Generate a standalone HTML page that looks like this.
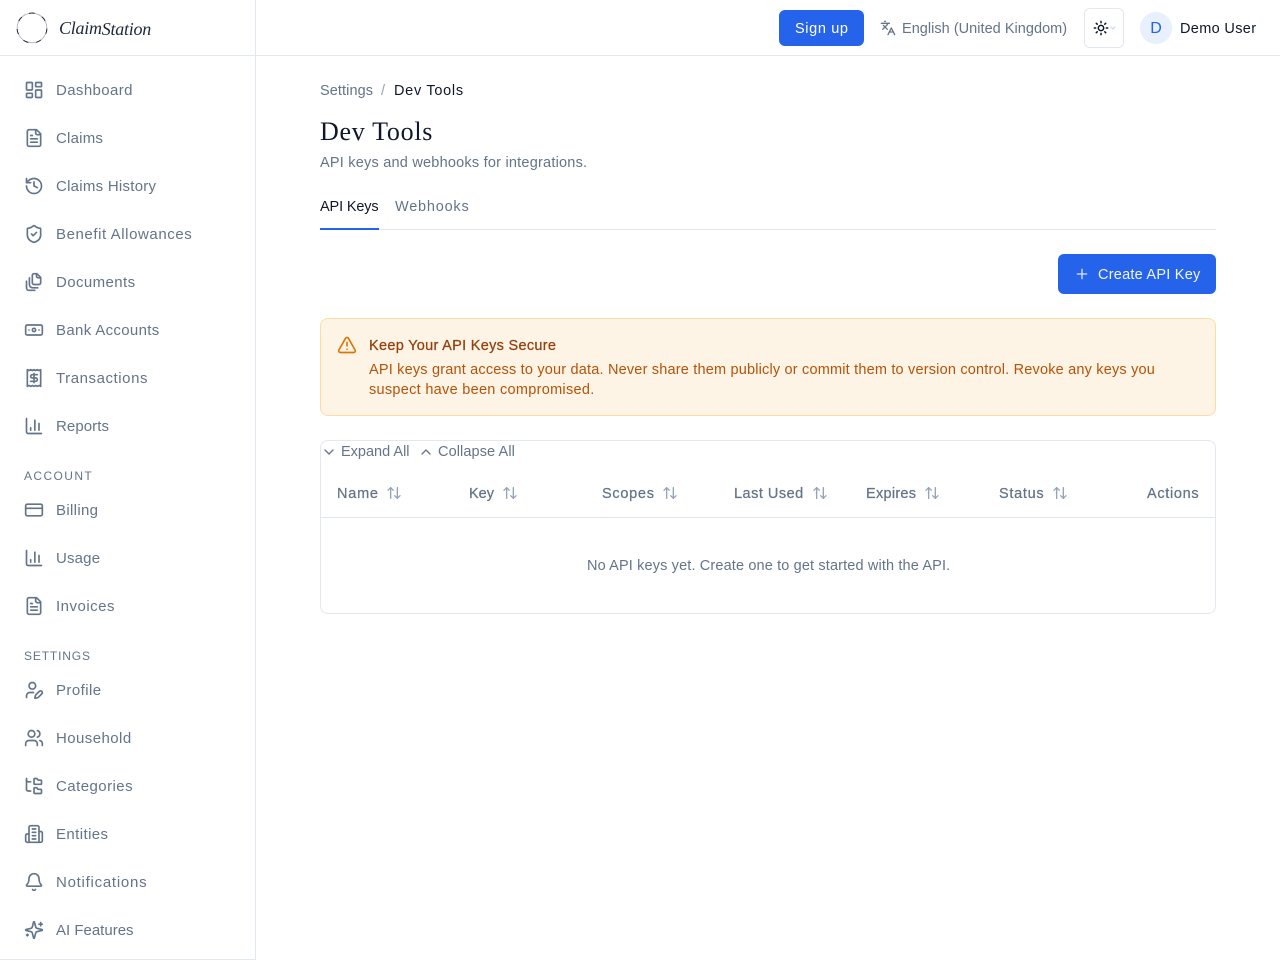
<!DOCTYPE html>
<html lang="en">
<head>
<meta charset="utf-8">
<title>Dev Tools</title>
<style>
*{box-sizing:border-box}
html,body{margin:0;padding:0;background:#fff}
body{width:1280px;height:960px;overflow:hidden;position:relative;font-family:"Liberation Sans",sans-serif;font-size:14.5px;color:#64748b}
.t{position:absolute;height:20px;line-height:20px;white-space:nowrap;margin-top:1px}
.n{font-size:15px}
.m{-webkit-text-stroke:.25px currentColor}
.i{position:absolute;fill:none;stroke:#64748b;stroke-width:2;stroke-linecap:round;stroke-linejoin:round}
.box{position:absolute}
.h{font-size:12px;height:16px;line-height:16px;margin-top:0}
.s{stroke:#94a3b8}
</style>
</head>
<body>
<aside class="box" style="left:0;top:0;width:256px;height:960px;border-right:1px solid #e2e8f0;border-bottom:1px solid #e2e8f0"></aside>
<header class="box" style="left:0;top:55px;width:1280px;height:1px;background:#e2e8f0"></header>

<svg class="box" style="left:16px;top:12px" width="32" height="32" viewBox="0 0 32 32" fill="none" stroke-linecap="round">
<path d="M16 1A17 17 0 0 1 27.7 6.6A17 17 0 0 1 30.6 19.3A17 17 0 0 1 22.5 29.5A17 17 0 0 1 9.5 29.5A17 17 0 0 1 1.4 19.3A17 17 0 0 1 4.3 6.6A17 17 0 0 1 16 1Z" stroke="#a3a8b0" stroke-width=".8"/>
<path pathLength="70" stroke-dasharray="2 6 2 0" d="M16 1A17 17 0 0 1 27.7 6.6A17 17 0 0 1 30.6 19.3A17 17 0 0 1 22.5 29.5A17 17 0 0 1 9.5 29.5A17 17 0 0 1 1.4 19.3A17 17 0 0 1 4.3 6.6A17 17 0 0 1 16 1Z" stroke="#0f172a" stroke-width=".9" stroke-linecap="butt"/>
</svg>
<div class="t" style="left:59px;top:18px;margin-top:0;font-family:'Liberation Serif',serif;font-style:italic;font-size:18px;color:#1e293b;letter-spacing:-.25px">Claim<span style="position:relative;top:1px">Station</span></div>

<!-- sidebar icons -->
<svg class="i" style="left:24px;top:80px" width="20" height="20" viewBox="0 0 24 24"><rect x="3" y="3" width="7" height="9" rx="1"/><rect x="14" y="3" width="7" height="5" rx="1"/><rect x="14" y="12" width="7" height="9" rx="1"/><rect x="3" y="16" width="7" height="5" rx="1"/></svg>
<div class="t n" style="left:56px;top:80px;letter-spacing:.38px">Dashboard</div>

<svg class="i" style="left:24px;top:128px" width="20" height="20" viewBox="0 0 24 24"><path d="M15 2H6a2 2 0 0 0-2 2v16a2 2 0 0 0 2 2h12a2 2 0 0 0 2-2V7Z"/><path d="M14 2v4a2 2 0 0 0 2 2h4"/><path d="M10 9H8"/><path d="M16 13H8"/><path d="M16 17H8"/></svg>
<div class="t n" style="left:56px;top:128px;letter-spacing:.22px">Claims</div>

<svg class="i" style="left:24px;top:176px" width="20" height="20" viewBox="0 0 24 24"><path d="M3 12a9 9 0 1 0 9-9 9.75 9.75 0 0 0-6.74 2.74L3 8"/><path d="M3 3v5h5"/><path d="M12 7v5l4 2"/></svg>
<div class="t n" style="left:56px;top:176px;letter-spacing:.26px">Claims History</div>

<svg class="i" style="left:24px;top:224px" width="20" height="20" viewBox="0 0 24 24"><path d="M20 13c0 5-3.5 7.5-7.66 8.95a1 1 0 0 1-.67-.01C7.5 20.5 4 18 4 13V6a1 1 0 0 1 1-1c2 0 4.5-1.2 6.24-2.72a1.17 1.17 0 0 1 1.52 0C14.51 3.81 17 5 19 5a1 1 0 0 1 1 1z"/><path d="m9 12 2 2 4-4"/></svg>
<div class="t n" style="left:56px;top:224px;letter-spacing:.58px">Benefit Allowances</div>

<svg class="i" style="left:24px;top:272px" width="20" height="20" viewBox="0 0 24 24"><path d="M20 6.5V13a2 2 0 0 1-2 2h-6a2 2 0 0 1-2-2V4a2 2 0 0 1 2-2h3.5z"/><path d="M15 2v3a2 2 0 0 0 2 2h3"/><path d="M6.5 7v8a4 4 0 0 0 4 4h6"/><path d="M3 11v8a3 3 0 0 0 3 3h7"/></svg>
<div class="t n" style="left:56px;top:272px;letter-spacing:.4px">Documents</div>

<svg class="i" style="left:24px;top:320px" width="20" height="20" viewBox="0 0 24 24"><rect x="2" y="6" width="20" height="12" rx="2"/><circle cx="12" cy="12" r="2"/><path d="M6 12h.01M18 12h.01"/></svg>
<div class="t n" style="left:56px;top:320px;letter-spacing:.34px">Bank Accounts</div>

<svg class="i" style="left:24px;top:368px" width="20" height="20" viewBox="0 0 24 24"><path d="M4 2v20l2-1 2 1 2-1 2 1 2-1 2 1 2-1 2 1V2l-2 1-2-1-2 1-2-1-2 1-2-1-2 1Z"/><path d="M16 8h-6a2 2 0 1 0 0 4h4a2 2 0 1 1 0 4H8"/><path d="M12 17.5v-11"/></svg>
<div class="t n" style="left:56px;top:368px;letter-spacing:.56px">Transactions</div>

<svg class="i" style="left:24px;top:416px" width="20" height="20" viewBox="0 0 24 24"><path d="M3 3v16a2 2 0 0 0 2 2h16"/><path d="M18 17V9"/><path d="M13 17V5"/><path d="M8 17v-3"/></svg>
<div class="t n" style="left:56px;top:416px;letter-spacing:.07px">Reports</div>

<div class="t h" style="left:24px;top:468px;letter-spacing:1.4px">ACCOUNT</div>

<svg class="i" style="left:24px;top:500px" width="20" height="20" viewBox="0 0 24 24"><rect x="2" y="5" width="20" height="14" rx="2"/><path d="M2 10h20"/></svg>
<div class="t n" style="left:56px;top:500px;letter-spacing:.33px">Billing</div>

<svg class="i" style="left:24px;top:548px" width="20" height="20" viewBox="0 0 24 24"><path d="M3 3v16a2 2 0 0 0 2 2h16"/><path d="M18 17V9"/><path d="M13 17V5"/><path d="M8 17v-3"/></svg>
<div class="t n" style="left:56px;top:548px;letter-spacing:.17px">Usage</div>

<svg class="i" style="left:24px;top:596px" width="20" height="20" viewBox="0 0 24 24"><path d="M15 2H6a2 2 0 0 0-2 2v16a2 2 0 0 0 2 2h12a2 2 0 0 0 2-2V7Z"/><path d="M14 2v4a2 2 0 0 0 2 2h4"/><path d="M10 9H8"/><path d="M16 13H8"/><path d="M16 17H8"/></svg>
<div class="t n" style="left:56px;top:596px;letter-spacing:.5px">Invoices</div>

<div class="t h" style="left:24px;top:648px;letter-spacing:.85px">SETTINGS</div>

<svg class="i" style="left:24px;top:680px" width="20" height="20" viewBox="0 0 24 24"><path d="M11.5 15H7a4 4 0 0 0-4 4v2"/><path d="M21.378 16.626a1 1 0 0 0-3.004-3.004l-4.01 4.012a2 2 0 0 0-.506.854l-.837 2.87a.5.5 0 0 0 .62.62l2.87-.837a2 2 0 0 0 .854-.506z"/><circle cx="10" cy="7" r="4"/></svg>
<div class="t n" style="left:56px;top:680px;letter-spacing:.42px">Profile</div>

<svg class="i" style="left:24px;top:728px" width="20" height="20" viewBox="0 0 24 24"><path d="M16 21v-2a4 4 0 0 0-4-4H6a4 4 0 0 0-4 4v2"/><circle cx="9" cy="7" r="4"/><path d="M22 21v-2a4 4 0 0 0-3-3.87"/><path d="M16 3.13a4 4 0 0 1 0 7.75"/></svg>
<div class="t n" style="left:56px;top:728px;letter-spacing:.43px">Household</div>

<svg class="i" style="left:24px;top:776px" width="20" height="20" viewBox="0 0 24 24"><path d="M20 10a1 1 0 0 0 1-1V6a1 1 0 0 0-1-1h-2.5a1 1 0 0 1-.8-.4l-.9-1.2A1 1 0 0 0 15 3h-2a1 1 0 0 0-1 1v5a1 1 0 0 0 1 1Z"/><path d="M20 21a1 1 0 0 0 1-1v-3a1 1 0 0 0-1-1h-2.9a1 1 0 0 1-.88-.55l-.42-.85a1 1 0 0 0-.92-.6H13a1 1 0 0 0-1 1v5a1 1 0 0 0 1 1Z"/><path d="M3 5a2 2 0 0 0 2 2h3"/><path d="M3 3v13a2 2 0 0 0 2 2h3"/></svg>
<div class="t n" style="left:56px;top:776px;letter-spacing:.45px">Categories</div>

<svg class="i" style="left:24px;top:824px" width="20" height="20" viewBox="0 0 24 24"><path d="M6 22V4a2 2 0 0 1 2-2h8a2 2 0 0 1 2 2v18Z"/><path d="M6 12H4a2 2 0 0 0-2 2v6a2 2 0 0 0 2 2h2"/><path d="M18 9h2a2 2 0 0 1 2 2v9a2 2 0 0 1-2 2h-2"/><path d="M10 6h4"/><path d="M10 10h4"/><path d="M10 14h4"/><path d="M10 18h4"/></svg>
<div class="t n" style="left:56px;top:824px;letter-spacing:.41px">Entities</div>

<svg class="i" style="left:24px;top:872px" width="20" height="20" viewBox="0 0 24 24"><path d="M10.268 21a2 2 0 0 0 3.464 0"/><path d="M3.262 15.326A1 1 0 0 0 4 17h16a1 1 0 0 0 .74-1.673C19.41 13.956 18 12.499 18 8A6 6 0 0 0 6 8c0 4.499-1.411 5.956-2.738 7.326"/></svg>
<div class="t n" style="left:56px;top:872px;letter-spacing:.74px">Notifications</div>

<svg class="i" style="left:24px;top:920px" width="20" height="20" viewBox="0 0 24 24"><path d="M9.937 15.5A2 2 0 0 0 8.5 14.063l-6.135-1.582a.5.5 0 0 1 0-.962L8.5 9.936A2 2 0 0 0 9.937 8.5l1.582-6.135a.5.5 0 0 1 .963 0L14.063 8.5A2 2 0 0 0 15.5 9.937l6.135 1.581a.5.5 0 0 1 0 .964L15.5 14.063a2 2 0 0 0-1.437 1.437l-1.582 6.135a.5.5 0 0 1-.963 0z"/><path d="M20 3v4"/><path d="M22 5h-4"/><path d="M4 17v2"/><path d="M5 18H3"/></svg>
<div class="t n" style="left:56px;top:920px;letter-spacing:0">AI Features</div>

<!-- header -->
<div class="box" style="left:779px;top:10px;width:85px;height:36px;background:#2563eb;border-radius:6px"></div>
<div class="t" style="left:795px;top:18px;color:#fff;letter-spacing:.63px">Sign up</div>
<svg class="i" style="left:880px;top:20px" width="16" height="16" viewBox="0 0 24 24"><path d="m5 8 6 6"/><path d="m4 14 6-6 2-3"/><path d="M2 5h12"/><path d="M7 2h1"/><path d="m22 22-5-10-5 10"/><path d="M14 18h6"/></svg>
<div class="t" style="left:902px;top:18px;letter-spacing:.03px">English (United Kingdom)</div>
<div class="box" style="left:1084px;top:8px;width:40px;height:40px;border:1px solid #e2e8f0;border-radius:6px"></div>
<svg class="i" style="left:1093px;top:20px;stroke:#0f172a;stroke-width:2.3" width="16" height="16" viewBox="0 0 24 24"><circle cx="12" cy="12" r="4"/><path d="M12 2v2"/><path d="M12 20v2"/><path d="m4.93 4.93 1.41 1.41"/><path d="m17.66 17.66 1.41 1.41"/><path d="M2 12h2"/><path d="M20 12h2"/><path d="m6.34 17.66-1.41 1.41"/><path d="m19.07 4.93-1.41 1.41"/></svg>
<svg class="i" style="left:1110px;top:25px;stroke:#cbd5e1;stroke-width:1" width="6" height="6" viewBox="0 0 6 6"><path d="M1 2l2 2 2-2"/></svg>
<div class="box" style="left:1140px;top:12px;width:32px;height:32px;border-radius:50%;background:#e8effd"></div>
<div class="t" style="left:1140px;top:18px;width:32px;text-align:center;color:#2563eb;font-size:16px">D</div>
<div class="t" style="left:1180px;top:18px;color:#0f172a;letter-spacing:.34px">Demo User</div>

<!-- page head -->
<div class="t" style="left:320px;top:80px;letter-spacing:.09px">Settings</div>
<div class="t" style="left:381px;top:80px;color:#94a3b8">/</div>
<div class="t" style="left:394px;top:80px;color:#0f172a;letter-spacing:.71px">Dev Tools</div>
<div class="t" style="left:320px;top:116px;margin-top:0;height:32px;line-height:32px;font-family:'Liberation Serif',serif;font-size:26px;color:#0f172a;letter-spacing:.7px">Dev Tools</div>
<div class="t" style="left:320px;top:152px;letter-spacing:.22px">API keys and webhooks for integrations.</div>
<div class="t" style="left:320px;top:196px;color:#0f172a;letter-spacing:-.14px">API Keys</div>
<div class="t" style="left:395px;top:196px;letter-spacing:.78px">Webhooks</div>
<div class="box" style="left:320px;top:229px;width:896px;height:1px;background:#e2e8f0"></div>
<div class="box" style="left:320px;top:228px;width:59px;height:2px;background:#2563eb"></div>

<div class="box" style="left:1058px;top:254px;width:158px;height:40px;background:#2563eb;border-radius:6px"></div>
<svg class="i" style="left:1074px;top:266px;stroke:#dbe6fd" width="16" height="16" viewBox="0 0 24 24"><path d="M5 12h14"/><path d="M12 5v14"/></svg>
<div class="t" style="left:1098px;top:264px;color:#f1f5fe;letter-spacing:.24px">Create API Key</div>

<!-- alert -->
<div class="box" style="left:320px;top:318px;width:896px;height:98px;background:#fef4e6;border:1px solid #fcdca6;border-radius:8px"></div>
<svg class="i" style="left:337px;top:335px;stroke:#d97706" width="20" height="20" viewBox="0 0 24 24"><path d="m21.73 18-8-14a2 2 0 0 0-3.48 0l-8 14A2 2 0 0 0 4 21h16a2 2 0 0 0 1.73-3"/><path d="M12 9v4"/><path d="M12 17h.01"/></svg>
<div class="t m" style="left:369px;top:335px;color:#92400e;letter-spacing:.3px">Keep Your API Keys Secure</div>
<div class="t" style="left:369px;top:359px;color:#b45309;letter-spacing:.19px">API keys grant access to your data. Never share them publicly or commit them to version control. Revoke any keys you</div>
<div class="t" style="left:369px;top:379px;color:#b45309;letter-spacing:.29px">suspect have been compromised.</div>

<!-- table -->
<div class="box" style="left:320px;top:440px;width:896px;height:174px;border:1px solid #e2e8f0;border-radius:8px"></div>
<svg class="i" style="left:321px;top:444px" width="16" height="16" viewBox="0 0 24 24"><path d="m6 9 6 6 6-6"/></svg>
<div class="t" style="left:341px;top:441px">Expand All</div>
<svg class="i" style="left:418px;top:444px" width="16" height="16" viewBox="0 0 24 24"><path d="m18 15-6-6-6 6"/></svg>
<div class="t" style="left:438px;top:441px;letter-spacing:.1px">Collapse All</div>

<div class="t m" style="left:337px;top:483px;letter-spacing:.77px">Name</div>
<svg class="i s" style="left:386px;top:485px" width="16" height="16" viewBox="0 0 24 24"><path d="m21 16-4 4-4-4"/><path d="M17 20V4"/><path d="m3 8 4-4 4 4"/><path d="M7 4v16"/></svg>
<div class="t m" style="left:469px;top:483px">Key</div>
<svg class="i s" style="left:502px;top:485px" width="16" height="16" viewBox="0 0 24 24"><path d="m21 16-4 4-4-4"/><path d="M17 20V4"/><path d="m3 8 4-4 4 4"/><path d="M7 4v16"/></svg>
<div class="t m" style="left:602px;top:483px;letter-spacing:.72px">Scopes</div>
<svg class="i s" style="left:662px;top:485px" width="16" height="16" viewBox="0 0 24 24"><path d="m21 16-4 4-4-4"/><path d="M17 20V4"/><path d="m3 8 4-4 4 4"/><path d="M7 4v16"/></svg>
<div class="t m" style="left:734px;top:483px;letter-spacing:.49px">Last Used</div>
<svg class="i s" style="left:812px;top:485px" width="16" height="16" viewBox="0 0 24 24"><path d="m21 16-4 4-4-4"/><path d="M17 20V4"/><path d="m3 8 4-4 4 4"/><path d="M7 4v16"/></svg>
<div class="t m" style="left:866px;top:483px;letter-spacing:.28px">Expires</div>
<svg class="i s" style="left:924px;top:485px" width="16" height="16" viewBox="0 0 24 24"><path d="m21 16-4 4-4-4"/><path d="M17 20V4"/><path d="m3 8 4-4 4 4"/><path d="M7 4v16"/></svg>
<div class="t m" style="left:999px;top:483px;letter-spacing:.7px">Status</div>
<svg class="i s" style="left:1052px;top:485px" width="16" height="16" viewBox="0 0 24 24"><path d="m21 16-4 4-4-4"/><path d="M17 20V4"/><path d="m3 8 4-4 4 4"/><path d="M7 4v16"/></svg>
<div class="t m" style="left:1147px;top:483px;letter-spacing:.68px">Actions</div>
<div class="box" style="left:321px;top:517px;width:894px;height:1px;background:#e2e8f0"></div>
<div class="t" style="left:587px;top:555px;letter-spacing:.14px">No API keys yet. Create one to get started with the API.</div>
</body>
</html>
